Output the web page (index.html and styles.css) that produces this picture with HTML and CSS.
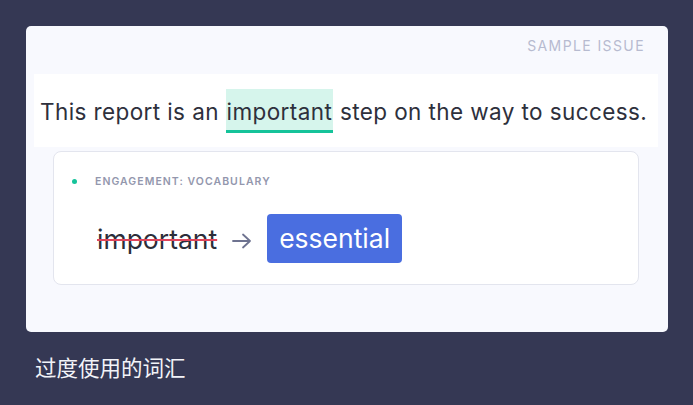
FILE: index.html
```html
<!DOCTYPE html>
<html>
<head>
<meta charset="utf-8">
<link rel="stylesheet" href="styles.css">
</head>
<body>
<div class="card">
  <div class="label">SAMPLE ISSUE</div>
  <div class="band">
    <p class="sentence">This report is an <span class="hl">important</span> step on the way to success.</p>
  </div>
  <div class="suggest">
    <div class="cat"><span class="dot"></span><span class="cat-text">ENGAGEMENT: VOCABULARY</span></div>
    <div class="swap">
      <span class="old">important</span>
      <svg class="arrow" width="20" height="16" viewBox="0 0 20 16"><path d="M1 8H18M11 1.5L18 8L11 14.5" fill="none" stroke="#6e7390" stroke-width="1.8" stroke-linecap="round" stroke-linejoin="round"/></svg>
      <span class="new">essential</span>
    </div>
  </div>
</div>
<div class="caption">过度使用的词汇</div>
</body>
</html>
```
FILE: styles.css
```css
html, body {
  margin: 0;
  padding: 0;
}
body {
  background: #353854;
  width: 693px;
  height: 405px;
  overflow: hidden;
  padding: 26px 0 0 26px;
  box-sizing: border-box;
  font-family: Inter, "Noto Sans", sans-serif;
}
.card {
  width: 642px;
  height: 306px;
  background: #f8f9fe;
  border-radius: 5px;
  box-sizing: border-box;
  padding: 12px 10px 0 8px;
}
.label {
  text-align: right;
  font-size: 14px;
  line-height: 16px;
  letter-spacing: 1.4px;
  color: #b7bbd0;
  padding-right: 13px;
  margin-bottom: 20px;
}
.band {
  background: #ffffff;
  height: 73px;
  box-sizing: border-box;
  padding: 15px 0 0 6px;
}
.sentence {
  margin: 0;
  font-size: 22.5px;
  letter-spacing: 0.4px;
  line-height: 44px;
  color: #2e303c;
  white-space: nowrap;
}
.hl {
  display: inline-block;
  background: #d6f5ec;
  border-bottom: 3px solid #15c39a;
  line-height: 37px;
  padding: 4px 1px 0;
}
.suggest {
  margin: 4px 0 0 19px;
  width: 586px;
  height: 134px;
  box-sizing: border-box;
  background: #ffffff;
  border: 1px solid #e3e5ee;
  border-radius: 8px;
  padding: 22px 0 0 18px;
}
.cat {
  display: flex;
  align-items: center;
  height: 14px;
}
.dot {
  width: 5px;
  height: 5px;
  border-radius: 50%;
  background: #15c39a;
  margin-right: 18px;
}
.cat-text {
  font-size: 10.5px;
  font-weight: 600;
  letter-spacing: 1.05px;
  color: #9397ad;
}
.swap {
  display: flex;
  align-items: center;
  margin-top: 26px;
  padding-left: 25px;
}
.old {
  font-size: 26.5px;
  color: #2c2e3a;
  text-decoration: line-through;
  text-decoration-color: #e0455c;
  text-decoration-thickness: 2px;
}
.arrow {
  margin: 4px 15px 0 15px;
}
.new {
  background: #4a6ee0;
  color: #ffffff;
  font-size: 26.5px;
  line-height: 49px;
  height: 49px;
  padding: 0 12px;
  border-radius: 4px;
}
.caption {
  margin: 20px 0 0 9px;
  font-family: "Noto Sans CJK SC", sans-serif;
  font-size: 21.5px;
  line-height: 30px;
  color: #f2f3f8;
}
```
